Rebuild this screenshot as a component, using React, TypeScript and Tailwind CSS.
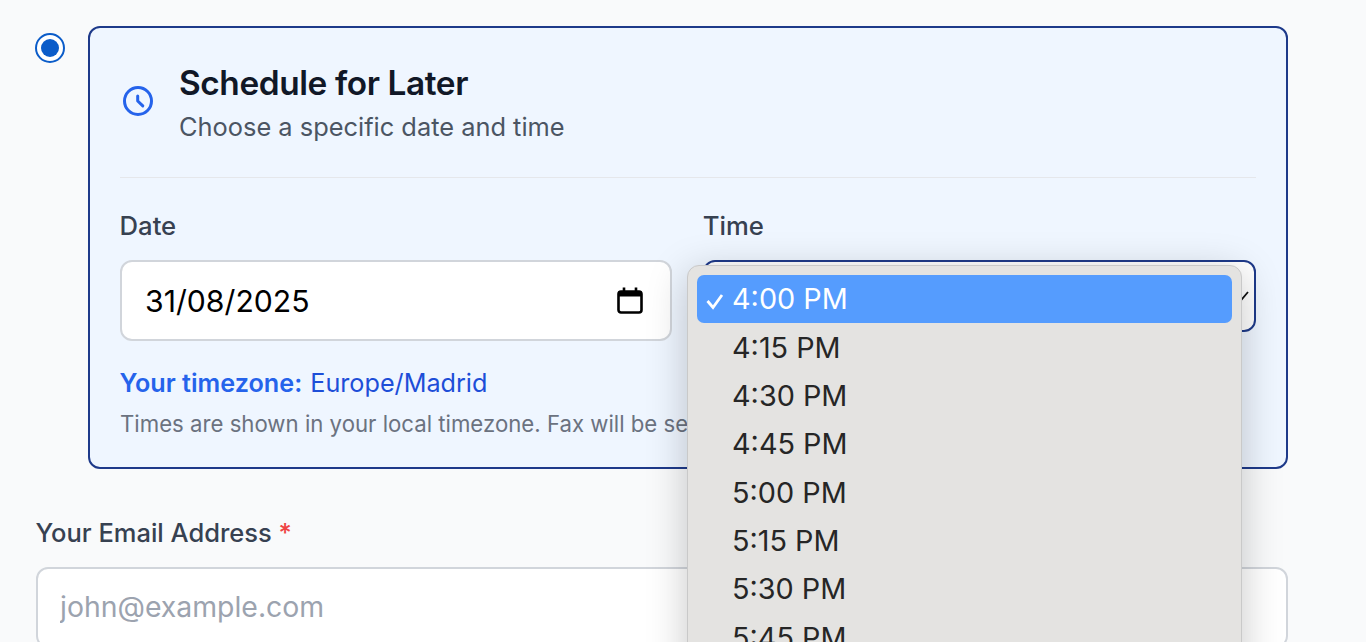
import React from "react";

const times = ["4:00 PM", "4:15 PM", "4:30 PM", "4:45 PM", "5:00 PM", "5:15 PM", "5:30 PM", "5:45 PM"];
const font = { fontFamily: "Inter, 'Liberation Sans', sans-serif" };

export default function App() {
  return (
    <div style={font} className="relative h-[642px] w-full overflow-hidden bg-[#f9fafb] pl-9 pr-[78.5px] pt-[26px]">
      <div className="flex items-start gap-[23px]">
        <div className="mt-[7px] -ml-px flex h-[30px] w-[30px] shrink-0 items-center justify-center rounded-full border-2 border-[#0b5cc9] bg-white">
          <div className="h-[18px] w-[18px] rounded-full bg-[#0b5cc9]" />
        </div>
        <div className="flex-1 rounded-[12px] border-2 border-[#1e3a8a] bg-[#eff6ff] px-[30px] pt-[35px] pb-[25px]">
          <div className="flex items-center gap-[25px] border-b border-[#e5e7eb] pb-[33px]">
            <svg width="36" height="36" viewBox="0 0 24 24" fill="none" stroke="#2563eb" strokeWidth="2" strokeLinecap="round" strokeLinejoin="round" className="mb-[5px] -mr-[2px] shrink-0">
              <circle cx="12" cy="12" r="9" />
              <path d="M11.8 8.6V12l3.4 3.3" />
            </svg>
            <div>
              <div className="-mt-px text-[33.4px] leading-[42px] font-semibold tracking-[-0.4px] text-[#111827]">Schedule for Later</div>
              <div className="mt-[6px] text-[25.4px] leading-[34px] text-[#4b5563]">Choose a specific date and time</div>
            </div>
          </div>
          <div className="mt-[31px] grid grid-cols-2 gap-[31px]">
            <div>
              <div className="mb-[15px] -ml-[0.5px] -mt-px pb-px text-[25.7px] leading-[36px] font-medium text-[#374151]">Date</div>
              <div className="flex h-[81px] items-center justify-between rounded-[12px] border-2 border-[#d1d5db] bg-white pl-[24px] pr-[27px] text-[30.2px] text-black">
                <span className="mt-[2px] -ml-px">31/08/2025</span>
                <svg width="26" height="28" viewBox="0 0 26 28" fill="none" className="mb-[2px] shrink-0">
                  <rect x="1.5" y="5.5" width="23" height="21" rx="2.5" stroke="#000" strokeWidth="2.6" />
                  <path d="M1.5 5.5h23v5h-23z" fill="#000" />
                  <path d="M7 1.5v5M19 1.5v5" stroke="#000" strokeWidth="2.6" />
                </svg>
              </div>
            </div>
            <div>
              <div className="mb-[15px] -ml-[0.5px] -mt-px pb-px text-[25.7px] leading-[36px] font-medium text-[#374151]">Time</div>
              <div className="flex h-[72px] items-center justify-end rounded-[12px] border-2 border-[#1e3a8a] bg-white pr-[5px]">
                <svg width="14" height="14" viewBox="0 0 14 14" fill="none" stroke="#111" strokeWidth="1.8" className="shrink-0">
                  <path d="M1 3l6 7 6-7" />
                </svg>
              </div>
            </div>
          </div>
          <div className="mt-[24px] -ml-[0.5px] text-[25.2px] leading-[36px] text-[#1d4ed8]">
            <span className="font-semibold text-[#2563eb]">Your timezone:</span> <span className="ml-px">Europe/Madrid</span>
          </div>
          <div className="mt-[5px] whitespace-nowrap text-[22.2px] leading-[36px] text-[#6b7280]">
            Times are shown in your local timezone. Fax will be sent at the selected time.
          </div>
        </div>
      </div>

      <div className="mt-[46px]">
        <div className="mb-[16px] -ml-[0.5px] text-[25.5px] leading-[36px] font-medium text-[#374151]">
          Your Email Address <span className="text-[#ef4444]">*</span>
        </div>
        <input
          placeholder="john@example.com"
          className="h-[81px] w-full rounded-[12px] border-2 border-[#d1d5db] bg-white px-[22px] pb-[2px] text-[28.4px] outline-none placeholder:text-[#9ca3af]"
        />
      </div>

      <div className="absolute left-[687px] top-[265px] h-[420px] w-[555px] rounded-[12px] border border-[#c9c9c9] bg-[#e4e3e1] px-[9px] pt-[9px] shadow-[0_8px_40px_rgba(0,0,0,0.22)]">
        {times.map((t, i) => (
          <div
            key={t}
            className={`relative flex h-[48.3px] items-center rounded-[7px] pl-[35px] text-[28.8px] ${i === 0 ? "bg-[#559cfe] pb-[2px] text-white" : "text-[#262626]"}`}
          >
            {i === 0 && (
              <svg width="20" height="20" viewBox="0 0 20 20" fill="none" stroke="#fff" strokeWidth="2.8" className="absolute left-[8px] top-[16px]">
                <path d="M2.5 10l5.5 6.5 9-12.5" />
              </svg>
            )}
            {t}
          </div>
        ))}
      </div>
    </div>
  );
}
